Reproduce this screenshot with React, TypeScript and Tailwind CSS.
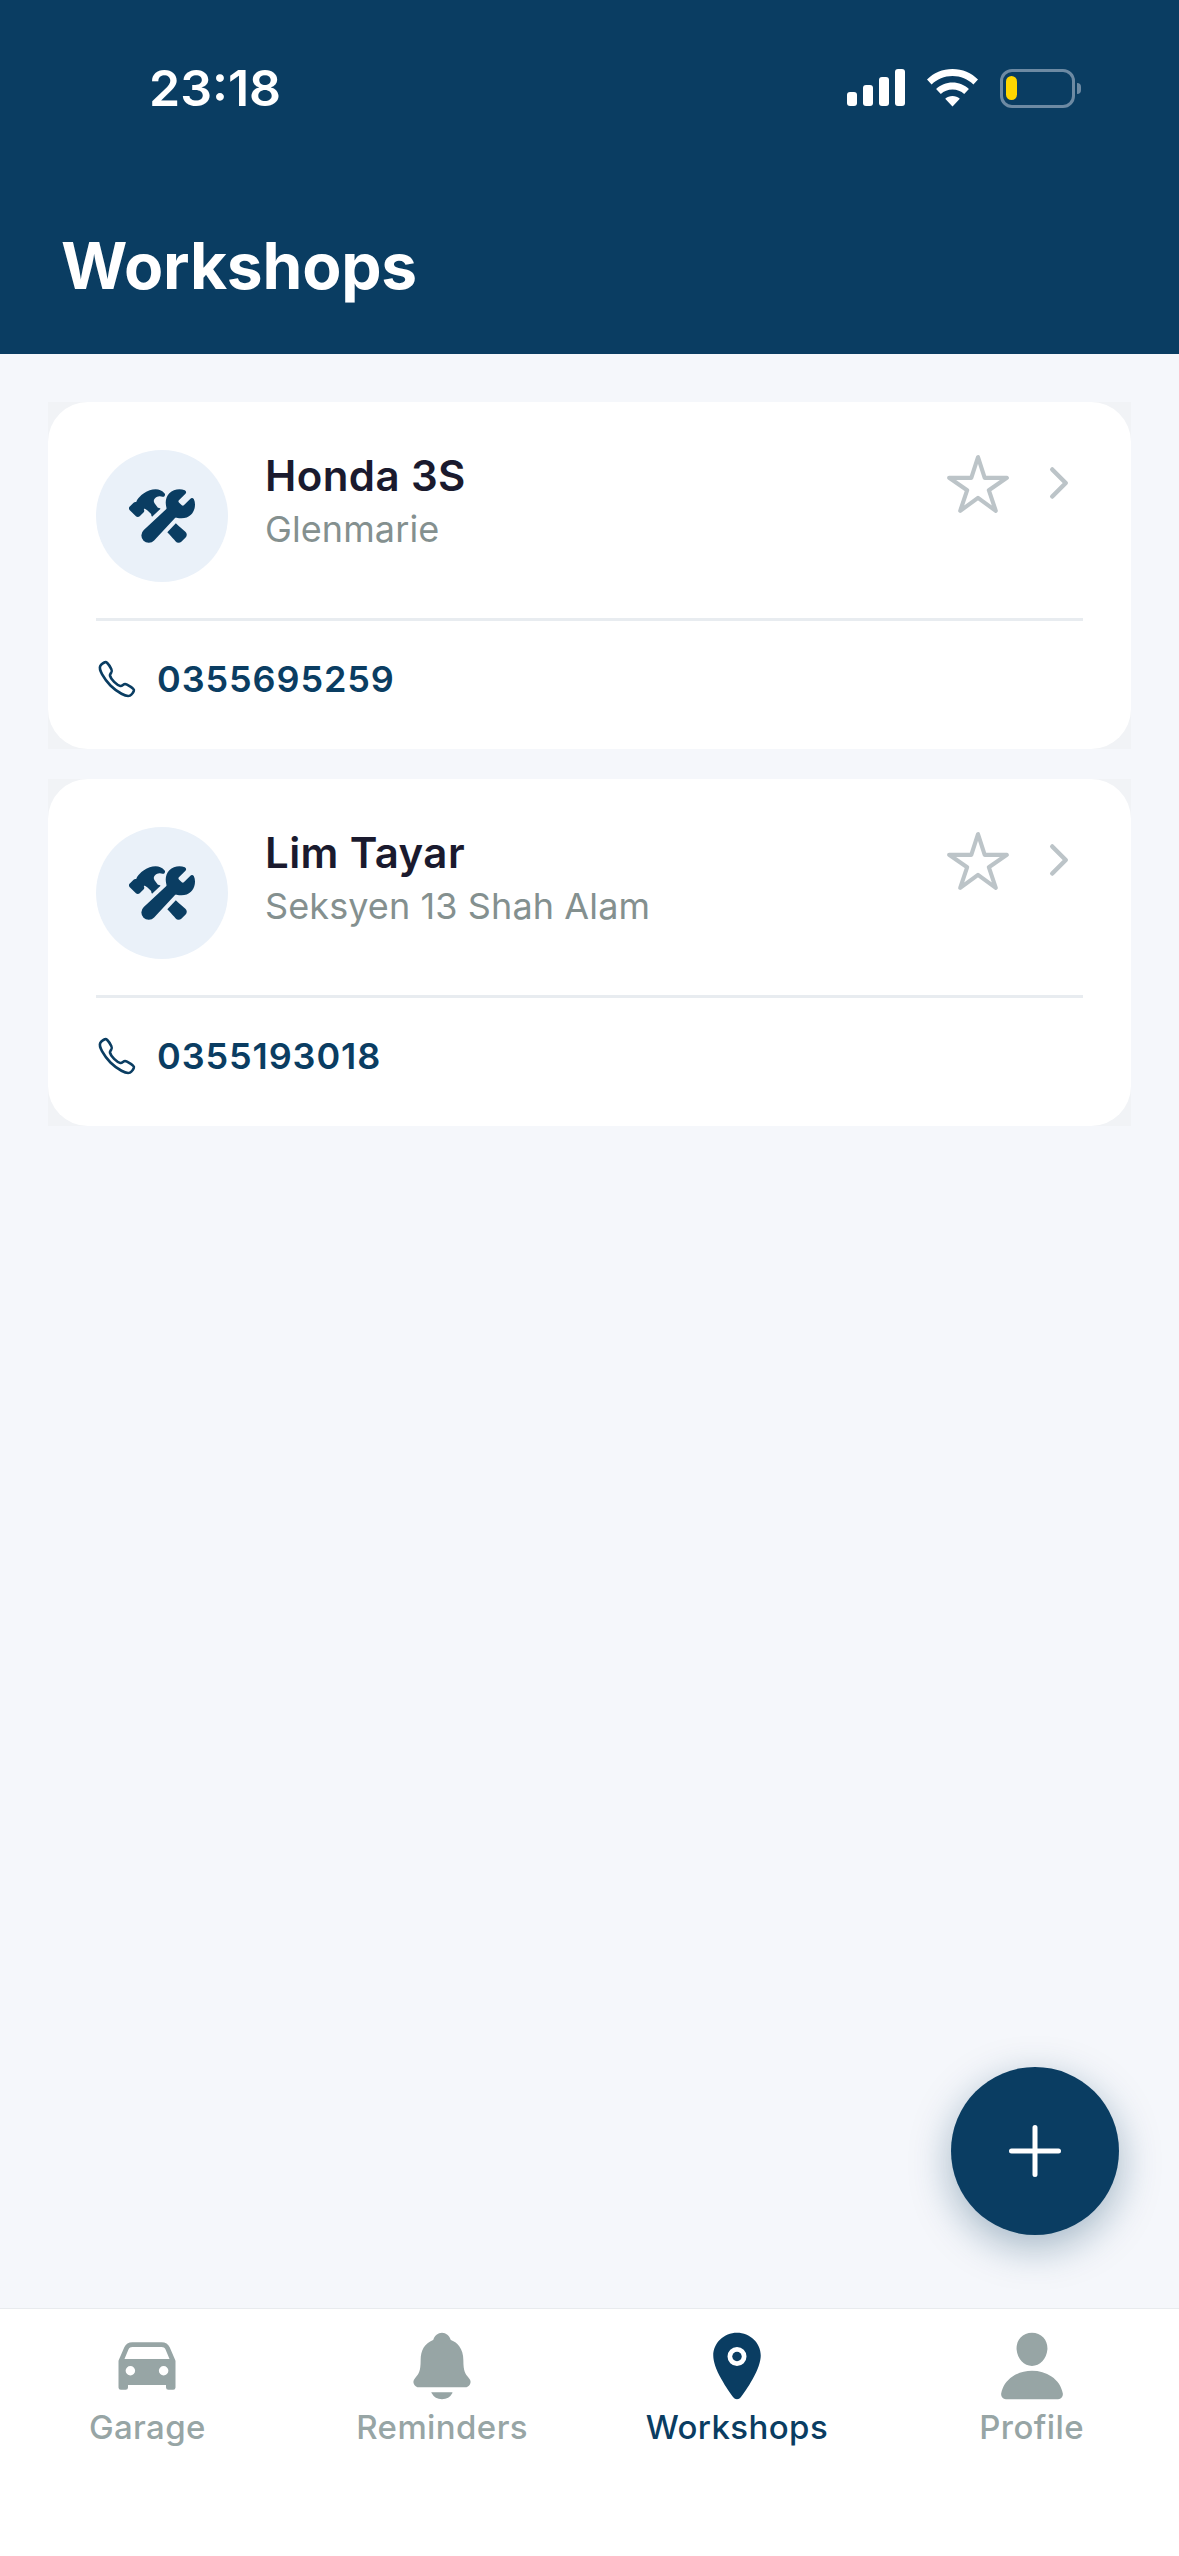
import {
  IoCallOutline,
  IoCar,
  IoChevronForward,
  IoConstruct,
  IoLocation,
  IoNotifications,
  IoPerson,
  IoStarOutline,
} from "react-icons/io5";

const workshops = [
  { name: "Honda 3S", area: "Glenmarie", phone: "0355695259" },
  { name: "Lim Tayar", area: "Seksyen 13 Shah Alam", phone: "0355193018" },
];

function StatusIcons() {
  return (
    <div className="flex items-center">
      <svg width="58" height="38" viewBox="0 0 58 38" fill="#fff">
        <rect x="0" y="23" width="10" height="14" rx="3" />
        <rect x="16" y="16" width="10" height="21" rx="3" />
        <rect x="32" y="8" width="10" height="29" rx="3" />
        <rect x="48" y="0" width="10" height="37" rx="3" />
      </svg>
      <svg className="ml-[22px]" width="51" height="38" viewBox="0 0 51 38" fill="#fff">
        <path d="M25.5 0C35.5 0 44.5 4 51 10.5L46.4 15.4C41 10.2 33.6 7 25.5 7S10 10.2 4.6 15.4L0 10.5C6.5 4 15.5 0 25.5 0Z" />
        <path d="M25.5 13.5C31.8 13.5 37.6 16 41.9 20L37.2 25C34.1 22.2 30 20.5 25.5 20.5S16.9 22.2 13.8 25L9.1 20C13.4 16 19.2 13.5 25.5 13.5Z" />
        <path d="M25.5 27C28.3 27 30.8 28 32.8 29.7L25.5 37.5L18.2 29.7C20.2 28 22.7 27 25.5 27Z" />
      </svg>
      <div className="ml-[22px] flex items-center">
        <div className="flex h-[39px] w-[75px] items-center rounded-[12px] border-[3px] border-[#6d8aa3] pl-[3px]">
          <div className="h-[24px] w-[11px] rounded-full bg-[#ffd600]" />
        </div>
        <div className="ml-[2px] h-[11px] w-[4px] rounded-r-full bg-[#6d8aa3]" />
      </div>
    </div>
  );
}

function WorkshopCard({ name, area, phone }: { name: string; area: string; phone: string }) {
  return (
    <div className="h-[347px] bg-[#f1f3f6]">
      <div className="h-full rounded-[40px] bg-white px-[48px] pt-[48px]">
        <div className="flex h-[171px] items-start border-b-[3px] border-[#e8ecf0]">
          <div className="flex h-[132px] w-[132px] items-center justify-center rounded-full bg-[#eaf1f9]">
            <IoConstruct size={66} color="#0a3d62" />
          </div>
          <div className="ml-[37px] flex-1">
            <div className="text-[42px] leading-[52px] font-semibold tracking-[0.4px] text-[#1a1a2e]">{name}</div>
            <div className="text-[36px] leading-[54px] tracking-[0.1px] text-[#84908f]">{area}</div>
          </div>
          <IoStarOutline size={66} color="#bcc4c8" className="mt-[1px]" />
          <IoChevronForward size={48} color="#bcc4c8" className="mt-[9px] ml-[24px]" />
        </div>
        <div className="mt-[36px] flex items-center">
          <IoCallOutline size={42} color="#0a3d62" />
          <span className="ml-[19px] text-[36px] leading-[44px] font-semibold tracking-[0.9px] text-[#0a3d62]">{phone}</span>
        </div>
      </div>
    </div>
  );
}

function Tab({ label, active, icon }: { label: string; active?: boolean; icon: React.ReactNode }) {
  return (
    <div className={`flex flex-1 flex-col items-center ${active ? "text-[#0a3d62]" : "text-[#97a5a5]"}`}>
      <div className="flex h-[76px] items-center justify-center">{icon}</div>
      <span className="mt-[3px] text-[33px] leading-[40px] font-medium tracking-[0.4px]">{label}</span>
    </div>
  );
}

export default function App() {
  return (
    <div className="relative flex h-[2556px] w-[1179px] flex-col bg-[#f5f7fb] font-['Inter',sans-serif]">
      <header className="h-[354px] bg-[#0a3d62] pr-[62px] pl-[61px] text-white">
        <div className="flex items-center justify-between pt-[68px] pr-[36px] pl-[88px]">
          <span className="text-[50px] leading-[40px] font-semibold">23:18</span>
          <StatusIcons />
        </div>
        <h1 className="mt-[118px] text-[64px] leading-[80px] font-bold tracking-[-0.2px]">Workshops</h1>
      </header>

      <main className="flex flex-1 flex-col gap-[30px] px-[48px] pt-[48px]">
        {workshops.map((w) => (
          <WorkshopCard key={w.name} {...w} />
        ))}
      </main>

      <nav className="flex h-[248px] border-t border-[#e8ebee] bg-white pt-[19px]">
        <Tab label="Garage" icon={<IoCar size={76} />} />
        <Tab label="Reminders" icon={<IoNotifications size={76} />} />
        <Tab label="Workshops" active icon={<IoLocation size={76} />} />
        <Tab label="Profile" icon={<IoPerson size={76} />} />
      </nav>

      <button className="absolute top-[2067px] left-[951px] flex h-[168px] w-[168px] items-center justify-center rounded-full bg-[#0a3d62] shadow-[0_12px_40px_rgba(10,61,98,0.35)]">
        <svg width="56" height="56" viewBox="0 0 56 56" stroke="#fff" strokeWidth="5" strokeLinecap="round">
          <path d="M28 4.5V51.5M4.5 28H51.5" />
        </svg>
      </button>
    </div>
  );
}
